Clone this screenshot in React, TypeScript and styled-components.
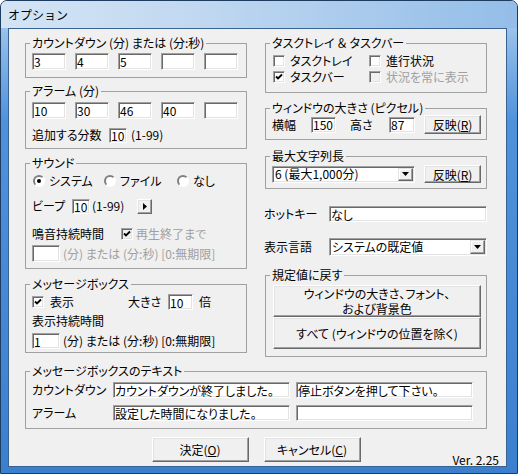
import React from "react";
import styled, { createGlobalStyle } from "styled-components";

const GlobalStyle = createGlobalStyle`
  html, body {
    margin: 0;
    padding: 0;
    background: #ffffff;
  }
  body {
    font-family: "Noto Sans CJK JP", "Noto Sans", sans-serif;
    font-size: 12px;
    color: #000;
    font-feature-settings: "palt";
  }
  * {
    box-sizing: border-box;
  }
`;

const Window = styled.div`
  width: 518px;
  height: 474px;
  display: flex;
  flex-direction: column;
  border: 1px solid #1d3c60;
  border-radius: 7px 7px 0 0;
  padding: 0 10px 6px 7px;
  background: linear-gradient(180deg, #b7d3f0 0px, #8fbbe8 40px, #4f92dc 120px, #3b80cf 100%);
  overflow: hidden;
`;

const TitleBar = styled.div`
  height: 27px;
  display: flex;
  align-items: center;
  padding-bottom: 1px;
  margin: 0 -10px 0 -7px;
  padding-left: 7px;
  font-size: 12px;
  font-feature-settings: normal;
  background: linear-gradient(90deg, #d4e4f5 0%, #c3d9f1 35%, #a9caec 70%, #93bde8 100%);
`;

const Client = styled.div`
  flex: 1;
  display: flex;
  flex-direction: column;
  background: #f0f0f0;
  border: 1px solid #3a6290;
  padding: 7px 19px 0 16px;
`;

const Columns = styled.div`
  display: grid;
  grid-template-columns: 222px 222px;
  column-gap: 18px;
  align-items: start;
`;

const Column = styled.div`
  display: flex;
  flex-direction: column;
`;

const Group = styled.fieldset<{ $h: number; $mt?: number }>`
  margin: ${(p) => p.$mt ?? 0}px 0 0;
  padding: 3px 6px 0;
  height: ${(p) => p.$h}px;
  min-width: 0;
  border: 1px solid #a0a0a0;
  display: flex;
  flex-direction: column;
`;

const Legend = styled.legend`
  padding: 0 2px;
  margin-left: -2px;
  line-height: 14px;
  font-size: 12px;
  white-space: pre;
`;

const Row = styled.div<{ $mt?: number; $h?: number; $ml?: number }>`
  display: flex;
  align-items: center;
  height: ${(p) => p.$h ?? 17}px;
  margin-top: ${(p) => p.$mt ?? 0}px;
  margin-left: ${(p) => p.$ml ?? 0}px;
  white-space: pre;
`;

const FreeRow = styled(Row)`
  margin-left: -1px;
`;

const Text = styled.span<{ $w?: number; $ml?: number; $off?: boolean }>`
  display: inline-block;
  flex: none;
  width: ${(p) => (p.$w ? `${p.$w}px` : "auto")};
  margin-left: ${(p) => p.$ml ?? 0}px;
  color: ${(p) => (p.$off ? "#a0a0a0" : "#000")};
  line-height: 14px;
  white-space: pre;
`;

const Edit = styled.input.attrs({ readOnly: true, type: "text" })<{
  $w: number;
  $h?: number;
  $ml?: number;
}>`
  flex: none;
  width: ${(p) => p.$w}px;
  height: ${(p) => p.$h ?? 17}px;
  margin: 0 0 0 ${(p) => p.$ml ?? 0}px;
  padding: 0 1px;
  font: inherit;
  font-feature-settings: "palt";
  color: #000;
  background: #fff;
  border: 1px solid;
  border-color: #a0a0a0 #fff #fff #a0a0a0;
  box-shadow: inset 1px 1px 0 #696969, inset -1px -1px 0 #e3e3e3;
  outline: none;
`;

const EditRow = styled.div`
  display: flex;
  gap: 9px;
`;

const Button = styled.button<{ $w: number; $h: number; $ml?: number }>`
  flex: none;
  width: ${(p) => p.$w}px;
  height: ${(p) => p.$h}px;
  margin: 0 0 0 ${(p) => p.$ml ?? 0}px;
  padding: 0;
  font: inherit;
  font-feature-settings: "palt";
  line-height: 15px;
  color: #000;
  background: #f0f0f0;
  border: 1px solid;
  border-color: #fff #696969 #696969 #fff;
  box-shadow: inset -1px -1px 0 #a0a0a0, inset 1px 1px 0 #e3e3e3;
  display: flex;
  align-items: center;
  justify-content: center;
  text-align: center;
  white-space: pre;
`;

const StackButtons = styled.div`
  display: flex;
  flex-direction: column;
  margin-left: 1px;
`;

const Combo = styled.div<{ $w: number; $h: number }>`
  flex: none;
  width: ${(p) => p.$w}px;
  height: ${(p) => p.$h}px;
  display: flex;
  align-items: center;
  background: #fff;
  border: 1px solid;
  border-color: #a0a0a0 #fff #fff #a0a0a0;
  box-shadow: inset 1px 1px 0 #696969, inset -1px -1px 0 #e3e3e3;
  padding: 1px 1px 1px 2px;
`;

const ComboText = styled.span`
  flex: 1;
  line-height: 14px;
`;

const ArrowBox = styled.span<{ $w: number; $h: number }>`
  flex: none;
  width: ${(p) => p.$w}px;
  height: ${(p) => p.$h}px;
  display: flex;
  align-items: center;
  justify-content: center;
  background: #f0f0f0;
  border: 1px solid;
  border-color: #e3e3e3 #696969 #696969 #e3e3e3;
  box-shadow: inset -1px -1px 0 #a0a0a0, inset 1px 1px 0 #fff;
`;

const CheckBox = styled.span<{ $off?: boolean }>`
  flex: none;
  width: 12px;
  height: 12px;
  display: inline-flex;
  align-items: center;
  justify-content: center;
  background: ${(p) => (p.$off ? "#f0f0f0" : "#fff")};
  border: 1px solid;
  border-color: #a0a0a0 #fff #fff #a0a0a0;
  box-shadow: inset 1px 1px 0 #696969, inset -1px -1px 0 #e3e3e3;
`;

const Radio = styled.span<{ $on?: boolean }>`
  flex: none;
  width: 12px;
  height: 12px;
  border-radius: 50%;
  background: #fff;
  border: 2px solid;
  border-color: #808080 #fff #fff #808080;
  display: inline-flex;
  align-items: center;
  justify-content: center;

  &::after {
    content: "";
    width: 4px;
    height: 4px;
    border-radius: 50%;
    background: ${(p) => (p.$on ? "#000" : "transparent")};
  }
`;

const Checks = styled.div`
  display: grid;
  grid-template-columns: 96px auto;
  margin-left: 1px;
`;

const Radios = styled.div`
  display: grid;
  grid-template-columns: 71px 73px auto;
  margin-left: 1px;
  height: 16px;
  align-items: center;
`;

const Choice = styled.span`
  display: flex;
  align-items: center;
  height: 16px;
  white-space: nowrap;
`;

const TextGroupWrap = styled.div`
  margin-top: 7px;
`;

const Footer = styled.div`
  flex: 1;
  display: grid;
  grid-template-columns: 1fr auto 1fr;
  margin-top: 8px;
`;

const FooterButtons = styled.div`
  grid-column: 2;
  display: flex;
  gap: 15px;
  align-self: start;
`;

const Version = styled.span`
  grid-column: 3;
  justify-self: end;
  align-self: end;
  margin-right: -12px;
  margin-bottom: -1px;
  line-height: 14px;
`;

function Tick() {
  return (
    <svg width="8" height="8" viewBox="0 0 8 8">
      <path d="M1 3.5 L3 5.5 L7 1.5" fill="none" stroke="#000" strokeWidth="1.8" />
    </svg>
  );
}

function Check({ checked, off, label, ml = 5 }: { checked?: boolean; off?: boolean; label: string; ml?: number }) {
  return (
    <Choice>
      <CheckBox $off={off}>{checked && <Tick />}</CheckBox>
      <Text $ml={ml} $off={off}>
        {label}
      </Text>
    </Choice>
  );
}

function Drop() {
  return (
    <svg width="7" height="4" viewBox="0 0 7 4">
      <path d="M0 0 H7 L3.5 4 Z" fill="#000" />
    </svg>
  );
}

function Play() {
  return (
    <svg width="4" height="7" viewBox="0 0 4 7">
      <path d="M0 0 V7 L4 3.5 Z" fill="#000" />
    </svg>
  );
}

const countdown = ["3", "4", "5", "", ""];
const alarms = ["10", "30", "46", "40", ""];

export default function App() {
  return (
    <>
      <GlobalStyle />
      <Window>
        <TitleBar>オプション</TitleBar>
        <Client>
          <Columns>
            <Column>
              <Group $h={42}>
                <Legend>カウントダウン (分) または (分:秒)</Legend>
                <EditRow>
                  {countdown.map((v, i) => (
                    <Edit key={i} $w={34} defaultValue={v} />
                  ))}
                </EditRow>
              </Group>

              <Group $h={65} $mt={6}>
                <Legend>アラーム (分)</Legend>
                <Row $mt={1}>
                  <EditRow>
                    {alarms.map((v, i) => (
                      <Edit key={i} $w={34} defaultValue={v} />
                    ))}
                  </EditRow>
                </Row>
                <Row $mt={8} $h={16}>
                  <Text $w={77}>追加する分数</Text>
                  <Edit $w={18} $h={15} defaultValue="10" />
                  <Text $ml={4}>(1-99)</Text>
                </Row>
              </Group>

              <Group $h={113} $mt={7}>
                <Legend>サウンド</Legend>
                <Radios>
                  <Choice>
                    <Radio $on />
                    <Text $ml={4}>システム</Text>
                  </Choice>
                  <Choice>
                    <Radio />
                    <Text $ml={4}>ファイル</Text>
                  </Choice>
                  <Choice>
                    <Radio />
                    <Text $ml={4}>なし</Text>
                  </Choice>
                </Radios>
                <Row $mt={9} $h={16}>
                  <Text $w={40}>ビープ</Text>
                  <Edit $w={18} $h={15} defaultValue="10" />
                  <Text $w={45} $ml={2}>
                    (1-99)
                  </Text>
                  <Button $w={15} $h={15}>
                    <Play />
                  </Button>
                </Row>
                <Row $mt={12} $h={16}>
                  <Text $w={89}>鳴音持続時間</Text>
                  <Check checked off label="再生終了まで" ml={3} />
                </Row>
                <Row $mt={3}>
                  <Edit $w={28} defaultValue="" />
                  <Text $ml={3} $off>
                    (分) または (分:秒) [0:無期限]
                  </Text>
                </Row>
              </Group>

              <Group $h={76} $mt={8}>
                <Legend>メッセージボックス</Legend>
                <Row $h={16}>
                  <CheckBox>
                    <Tick />
                  </CheckBox>
                  <Text $ml={6} $w={78}>
                    表示
                  </Text>
                  <Text $w={40}>大きさ</Text>
                  <Edit $w={25} $h={16} defaultValue="10" />
                  <Text $ml={6}>倍</Text>
                </Row>
                <Row $mt={4} $h={14}>
                  <Text>表示持続時間</Text>
                </Row>
                <Row $mt={5} $h={16}>
                  <Edit $w={28} $h={16} defaultValue="1" />
                  <Text $ml={3}>(分) または (分:秒) [0:無期限]</Text>
                </Row>
              </Group>
            </Column>

            <Column>
              <Group $h={57}>
                <Legend>タスクトレイ ＆ タスクバー</Legend>
                <Checks>
                  <Check label="タスクトレイ" />
                  <Check label="進行状況" />
                  <Check checked label="タスクバー" />
                  <Check off label="状況を常に表示" />
                </Checks>
              </Group>

              <Group $h={39} $mt={8}>
                <Legend>ウィンドウの大きさ (ピクセル)</Legend>
                <Row $mt={-3} $h={19}>
                  <Text $w={39}>横幅</Text>
                  <Edit $w={25} $h={16} defaultValue="150" />
                  <Text $w={39} $ml={14}>
                    高さ
                  </Text>
                  <Edit $w={26} $h={16} defaultValue="87" />
                  <Button $w={57} $h={19} $ml={9}>
                    反映(<u>R</u>)
                  </Button>
                </Row>
              </Group>

              <Group $h={40} $mt={9}>
                <Legend>最大文字列長</Legend>
                <Row $mt={-1} $h={18}>
                  <Combo $w={143} $h={17}>
                    <ComboText>6 (最大1,000分)</ComboText>
                    <ArrowBox $w={15} $h={13}>
                      <Drop />
                    </ArrowBox>
                  </Combo>
                  <Button $w={57} $h={18} $ml={9}>
                    反映(<u>R</u>)
                  </Button>
                </Row>
              </Group>

              <FreeRow $mt={17} $h={16}>
                <Text $w={65}>ホットキー</Text>
                <Edit $w={158} $h={16} defaultValue="なし" />
              </FreeRow>

              <FreeRow $mt={16} $h={18}>
                <Text $w={65}>表示言語</Text>
                <Combo $w={158} $h={18}>
                  <ComboText>システムの既定値</ComboText>
                  <ArrowBox $w={15} $h={14}>
                    <Drop />
                  </ArrowBox>
                </Combo>
              </FreeRow>

              <Group $h={89} $mt={12}>
                <Legend>規定値に戻す</Legend>
                <StackButtons>
                  <Button $w={208} $h={32}>
                    {"ウィンドウの大きさ、フォント、\nおよび背景色"}
                  </Button>
                  <Button $w={208} $h={32}>
                    すべて (ウィンドウの位置を除く)
                  </Button>
                </StackButtons>
              </Group>
            </Column>
          </Columns>

          <TextGroupWrap>
            <Group $h={65}>
              <Legend>メッセージボックスのテキスト</Legend>
              <Row $mt={1} $h={16}>
                <Text $w={81}>カウントダウン</Text>
                <Edit $w={177} $h={16} defaultValue="カウントダウンが終了しました。" />
                <Edit $w={177} $h={16} $ml={6} defaultValue="停止ボタンを押して下さい。" />
              </Row>
              <Row $mt={7} $h={16}>
                <Text $w={81}>アラーム</Text>
                <Edit $w={177} $h={16} defaultValue="設定した時間になりました。" />
                <Edit $w={177} $h={16} $ml={6} defaultValue="" />
              </Row>
            </Group>
          </TextGroupWrap>

          <Footer>
            <FooterButtons>
              <Button $w={97} $h={25}>
                決定(<u>O</u>)
              </Button>
              <Button $w={97} $h={25}>
                キャンセル(<u>C</u>)
              </Button>
            </FooterButtons>
            <Version>Ver. 2.25</Version>
          </Footer>
        </Client>
      </Window>
    </>
  );
}
